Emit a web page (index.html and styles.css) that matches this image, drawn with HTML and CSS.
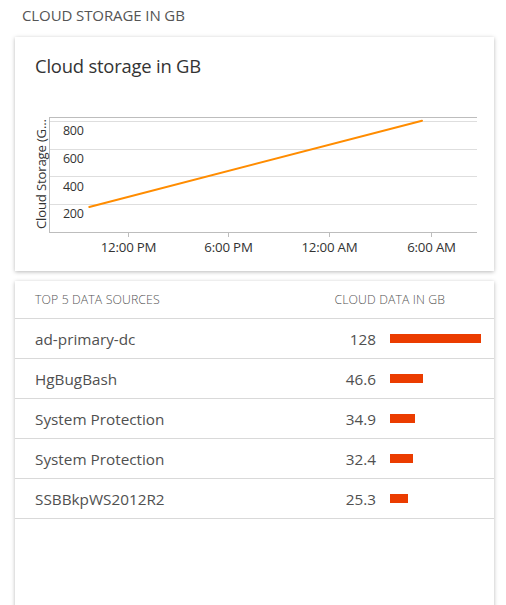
FILE: index.html
```html
<!DOCTYPE html>
<html>
<head>
<meta charset="utf-8">
<link rel="stylesheet" href="styles.css">
</head>
<body>
<div class="page">
  <div class="page-title">CLOUD STORAGE IN GB</div>
  <section class="card chart-card">
    <h2 class="card-title">Cloud storage in GB</h2>
    <svg class="chart" width="479" height="160" viewBox="0 0 479 160">
      <line x1="34" y1="12.5" x2="462" y2="12.5" class="axis"/>
      <line x1="34" y1="16.5" x2="462" y2="16.5" class="grid"/>
      <line x1="34" y1="44.5" x2="462" y2="44.5" class="grid"/>
      <line x1="34" y1="71.5" x2="462" y2="71.5" class="grid"/>
      <line x1="34" y1="99.5" x2="462" y2="99.5" class="grid"/>
      <line x1="34.5" y1="12" x2="34.5" y2="127" class="axis"/>
      <line x1="34" y1="127.5" x2="462" y2="127.5" class="axis"/>
      <line x1="113.5" y1="127" x2="113.5" y2="132" class="axis"/>
      <line x1="213.5" y1="127" x2="213.5" y2="132" class="axis"/>
      <line x1="314.5" y1="127" x2="314.5" y2="132" class="axis"/>
      <line x1="416.5" y1="127" x2="416.5" y2="132" class="axis"/>
      <text x="48" y="30" class="tick">800</text>
      <text x="48" y="58" class="tick">600</text>
      <text x="48" y="85.5" class="tick">400</text>
      <text x="48" y="113" class="tick">200</text>
      <text x="113.5" y="146.5" class="tick mid xl">12:00 PM</text>
      <text x="213.5" y="146.5" class="tick mid xl">6:00 PM</text>
      <text x="314.5" y="146.5" class="tick mid xl">12:00 AM</text>
      <text x="416.5" y="146.5" class="tick mid xl">6:00 AM</text>
      <text transform="translate(31,124) rotate(-90)" class="ytitle">Cloud Storage (G...</text>
      <line x1="74.3" y1="102" x2="407" y2="15.7" class="series"/>
    </svg>
  </section>
  <section class="card table-card">
    <div class="table-head">
      <span>TOP 5 DATA SOURCES</span>
      <span>CLOUD DATA IN GB</span>
    </div>
    <div class="row"><span class="name">ad-primary-dc</span><span class="val">128</span><span class="bar-cell"><span class="bar" style="width:91px"></span></span></div>
    <div class="row"><span class="name">HgBugBash</span><span class="val">46.6</span><span class="bar-cell"><span class="bar" style="width:33px"></span></span></div>
    <div class="row"><span class="name">System Protection</span><span class="val">34.9</span><span class="bar-cell"><span class="bar" style="width:25px"></span></span></div>
    <div class="row"><span class="name">System Protection</span><span class="val">32.4</span><span class="bar-cell"><span class="bar" style="width:23px"></span></span></div>
    <div class="row"><span class="name">SSBBkpWS2012R2</span><span class="val">25.3</span><span class="bar-cell"><span class="bar" style="width:18px"></span></span></div>
  </section>
</div>
</body>
</html>
```
FILE: styles.css
```css
* { box-sizing: border-box; }
html, body {
  margin: 0;
  padding: 0;
  background: #fff;
  overflow: hidden;
}
body {
  font-family: "Open Sans", "Noto Sans", sans-serif;
  color: #444;
}
.page {
  width: 506px;
  height: 605px;
  overflow: hidden;
}
.page-title {
  font-size: 15px;
  line-height: 20px;
  color: #555;
  padding: 5px 0 0 22px;
  height: 37px;
  letter-spacing: -0.1px;
}
.card {
  margin: 0 12px 0 15px;
  background: #fff;
  box-shadow: 0 1px 4px rgba(0, 0, 0, 0.28);
}
.chart-card {
  height: 234px;
  padding-top: 15px;
}
.card-title {
  margin: 0 0 0 20px;
  font-weight: 400;
  font-size: 18.4px;
  color: #333;
  height: 53px;
  line-height: 28px;
  letter-spacing: -0.2px;
}
.chart {
  display: block;
}
.chart .axis { stroke: #bdbdbd; stroke-width: 1; }
.chart .grid { stroke: #dedede; stroke-width: 1; }
.chart .series { stroke: #ff8c00; stroke-width: 2; stroke-linecap: round; }
.chart text {
  font-family: "Open Sans", "Noto Sans", sans-serif;
  fill: #333;
}
.chart .tick { font-size: 12.5px; letter-spacing: -0.3px; }
.chart .xl { font-size: 13.3px; letter-spacing: -0.2px; }
.chart .mid { text-anchor: middle; }
.chart .ytitle { font-size: 13.2px; letter-spacing: -0.2px; }
.table-card {
  margin-top: 10px;
  height: 340px;
}
.table-head {
  display: flex;
  justify-content: space-between;
  align-items: center;
  height: 38px;
  padding: 0 49px 0 20px;
  font-size: 12.3px;
  font-weight: 300;
  color: #555;
  border-bottom: 1px solid #d9d9d9;
  letter-spacing: 0.1px;
}
.row {
  display: grid;
  grid-template-columns: 1fr 60px 91px;
  column-gap: 14px;
  align-items: center;
  height: 40px;
  padding: 0 13px 0 20px;
  border-bottom: 1px solid #d9d9d9;
  font-size: 15.3px;
  color: #505050;
}
.val {
  text-align: right;
}
.bar-cell {
  display: flex;
  align-items: center;
}
.bar {
  display: block;
  height: 9px;
  background: #eb3c00;
}
```
